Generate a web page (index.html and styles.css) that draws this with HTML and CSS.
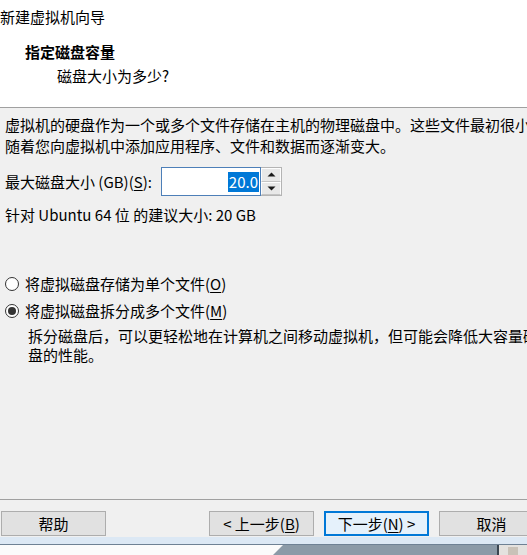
FILE: index.html
```html
<!DOCTYPE html>
<html lang="zh-CN">
<head>
<meta charset="utf-8">
<title>新建虚拟机向导</title>
<link rel="stylesheet" href="styles.css">
</head>
<body>
<div class="window">
  <div class="header">
    <div class="title">新建虚拟机向导</div>
    <div class="heading">指定磁盘容量</div>
    <div class="sub">磁盘大小为多少?</div>
  </div>
  <div class="content">
    <p class="para">虚拟机的硬盘作为一个或多个文件存储在主机的物理磁盘中。这些文件最初很小，<br>随着您向虚拟机中添加应用程序、文件和数据而逐渐变大。</p>
    <div class="size-row">
      <span class="label">最大磁盘大小 (GB)(<u>S</u>):</span>
      <div class="spin">
        <div class="spin-input"><span class="sel">20.0</span></div>
        <div class="spin-btns">
          <div class="spin-btn"><svg width="9" height="5" viewBox="0 0 9 5"><path d="M0.5 4.5 L4.5 0.5 L8.5 4.5 Z" fill="#1a1a1a"/></svg></div>
          <div class="spin-btn"><svg width="9" height="5" viewBox="0 0 9 5"><path d="M0.5 0.5 L4.5 4.5 L8.5 0.5 Z" fill="#1a1a1a"/></svg></div>
        </div>
      </div>
    </div>
    <div class="rec">针对 Ubuntu 64 位 的建议大小: 20 GB</div>
    <div class="radio-row first">
      <span class="radio"></span>
      <span>将虚拟磁盘存储为单个文件(<u>O</u>)</span>
    </div>
    <div class="radio-row">
      <span class="radio checked"></span>
      <span>将虚拟磁盘拆分成多个文件(<u>M</u>)</span>
    </div>
    <p class="desc">拆分磁盘后，可以更轻松地在计算机之间移动虚拟机，但可能会降低大容量磁<br>盘的性能。</p>
  </div>
  <div class="footer">
    <button class="btn">帮助</button>
    <div class="spacer"></div>
    <button class="btn">&lt; 上一步(<u>B</u>)</button>
    <button class="btn focus">下一步(<u>N</u>) &gt;</button>
    <button class="btn">取消</button>
  </div>
  <div class="frame"></div>
  <div class="desktop">
    <svg width="527" height="10" viewBox="0 0 527 10">
      <rect x="0" y="0" width="527" height="10" fill="#fbfbfb"/>
      <polygon points="283,0 497,0 497,10 273,10" fill="#8b9aa7"/>
      <rect x="497" y="0" width="2" height="10" fill="#3a4550"/>
      <rect x="499" y="0" width="28" height="10" fill="#e4e2df"/>
      <rect x="508" y="2" width="10" height="8" fill="#c9c2b8"/>
    </svg>
  </div>
</div>
</body>
</html>
```
FILE: styles.css
```css
html, body {
  margin: 0;
  padding: 0;
  width: 527px;
  height: 555px;
  overflow: hidden;
  background: #f0f0f0;
}
.window {
  width: 560px;
  font-family: "Noto Sans CJK SC", "Noto Sans", sans-serif;
  font-size: 15px;
  color: #000;
}
u { text-decoration: underline; text-underline-offset: 2px; }
.header {
  height: 108px;
  box-sizing: border-box;
  background: #fff;
  border-bottom: 1px solid #a0a0a0;
  padding-top: 7px;
  line-height: 20px;
}
.title { padding-left: 0; }
.heading { margin-top: 15px; padding-left: 25px; font-weight: bold; }
.sub { margin-top: 4px; padding-left: 57px; }
.content {
  height: 391px;
  box-sizing: border-box;
  padding: 6px 0 0 5px;
  background: #f0f0f0;
}
.para { margin: 0; line-height: 21px; white-space: nowrap; }
.size-row {
  margin-top: 11px;
  display: flex;
  align-items: center;
  height: 29px;
}
.label { width: 156px; }
.spin { display: flex; height: 29px; }
.spin-input {
  width: 100px;
  box-sizing: border-box;
  border: 1px solid #4d7fb8;
  background: #fff;
  display: flex;
  align-items: center;
  justify-content: flex-end;
  padding-right: 1px;
}
.sel {
  background: #0078d7;
  color: #fff;
  line-height: 20px;
  padding: 0 1px;
}
.spin-btns {
  width: 21px;
  display: flex;
  flex-direction: column;
  border: 1px solid #b4b4b4;
  border-left: none;
  box-sizing: border-box;
  background: #f0f0f0;
}
.spin-btn {
  flex: 1;
  display: flex;
  align-items: center;
  justify-content: center;
  background: #e8e8e8;
  border: 1px solid #fdfdfd;
  border-bottom-color: #c4c4c4;
}
.rec { margin-top: 9px; line-height: 20px; }
.radio-row {
  display: flex;
  align-items: center;
  gap: 6px;
  line-height: 20px;
  margin-top: 7px;
}
.radio-row.first { margin-top: 49px; }
.radio {
  width: 14px;
  height: 14px;
  box-sizing: border-box;
  border: 1px solid #333;
  border-radius: 50%;
  background: #fff;
  display: flex;
  align-items: center;
  justify-content: center;
}
.radio.checked::after {
  content: "";
  width: 8px;
  height: 8px;
  border-radius: 50%;
  background: #333;
}
.desc {
  margin: 5px 0 0 23px;
  line-height: 19px;
  white-space: nowrap;
}
.footer {
  height: 38px;
  box-sizing: border-box;
  border-top: 1px solid #a0a0a0;
  background: #f0f0f0;
  display: flex;
  align-items: flex-start;
  padding: 11px 0 0 1px;
  gap: 10px;
}
.spacer { width: 83px; }
.btn {
  width: 105px;
  height: 25px;
  box-sizing: border-box;
  border: 1px solid #adadad;
  background: #e1e1e1;
  font-family: "Noto Sans CJK SC", "Noto Sans", sans-serif;
  font-size: 15px;
  line-height: 20px;
  padding: 0;
  color: #000;
}
.btn.focus {
  border: 2px solid #0078d7;
  background: #e5f1fb;
}
.frame {
  height: 7px;
  background: #dce8f4;
  border-bottom: 1px solid #6e8194;
}
.desktop { height: 10px; line-height: 0; }
```
